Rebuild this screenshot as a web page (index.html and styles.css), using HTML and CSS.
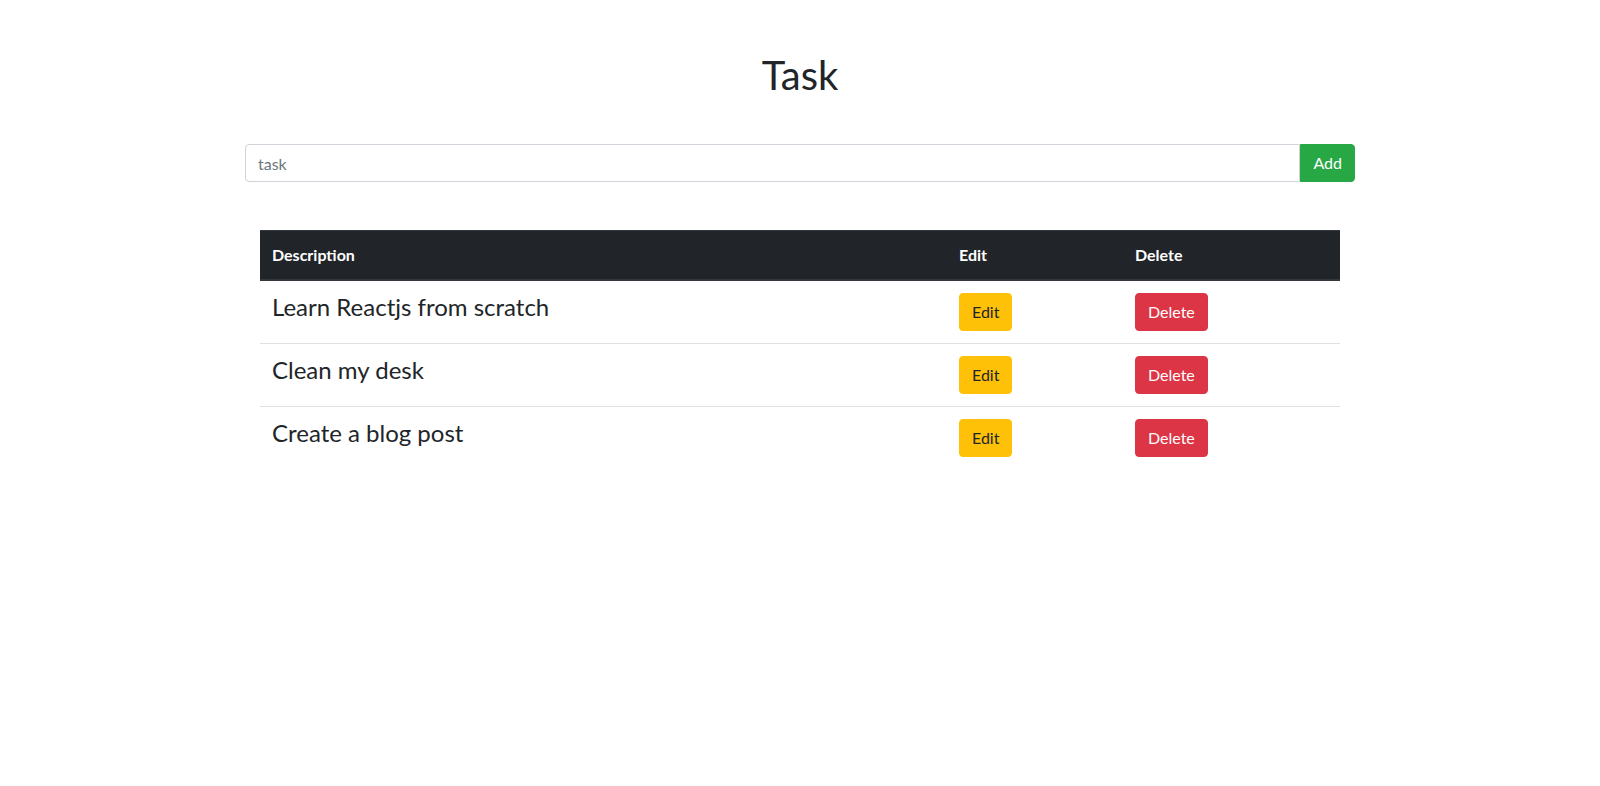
FILE: index.html
```html
<!DOCTYPE html>
<html lang="en">
<head>
<meta charset="utf-8">
<title>Task</title>
<link rel="stylesheet" href="styles.css">
</head>
<body>
<div class="container">
  <h1 class="title">Task</h1>
  <div class="input-group">
    <input class="task-input" type="text" placeholder="task">
    <button class="btn btn-add">Add</button>
  </div>
  <div class="table-wrap">
    <table class="task-table">
      <thead>
        <tr>
          <th class="col-desc">Description</th>
          <th class="col-edit">Edit</th>
          <th class="col-del">Delete</th>
        </tr>
      </thead>
      <tbody>
        <tr>
          <td><h4 class="task-text">Learn Reactjs from scratch</h4></td>
          <td><button class="btn btn-edit">Edit</button></td>
          <td><button class="btn btn-delete">Delete</button></td>
        </tr>
        <tr>
          <td><h4 class="task-text">Clean my desk</h4></td>
          <td><button class="btn btn-edit">Edit</button></td>
          <td><button class="btn btn-delete">Delete</button></td>
        </tr>
        <tr>
          <td><h4 class="task-text">Create a blog post</h4></td>
          <td><button class="btn btn-edit">Edit</button></td>
          <td><button class="btn btn-delete">Delete</button></td>
        </tr>
      </tbody>
    </table>
  </div>
</div>
</body>
</html>
```
FILE: styles.css
```css
* { box-sizing: border-box; }

body {
  margin: 0;
  font-family: Lato, "Liberation Sans", sans-serif;
  font-size: 16px;
  line-height: 1.5;
  color: #212529;
  background: #fff;
}

.container {
  max-width: 1140px;
  margin: 0 auto;
  padding: 0 15px;
}

.title {
  text-align: center;
  font-size: 40px;
  font-weight: 400;
  line-height: 1.2;
  margin: 51px 0 0;
}

.input-group {
  display: flex;
  margin-top: 45px;
}

.task-input {
  flex: 1;
  height: 38px;
  padding: 6px 12px;
  font-family: inherit;
  font-size: 16px;
  line-height: 1.5;
  color: #495057;
  border: 1px solid #ced4da;
  border-radius: 4px 0 0 4px;
  outline: none;
}

.task-input::placeholder { color: #6c757d; }

.btn {
  display: inline-block;
  font-family: inherit;
  font-size: 16px;
  line-height: 1.5;
  padding: 6px 12px;
  border: 1px solid transparent;
  border-radius: 4px;
  cursor: pointer;
}

.btn-add {
  background: #28a745;
  border-color: #28a745;
  color: #fff;
  border-radius: 0 4px 4px 0;
}

.btn-edit {
  background: #ffc107;
  border-color: #ffc107;
  color: #212529;
}

.btn-delete {
  background: #dc3545;
  border-color: #dc3545;
  color: #fff;
}

.table-wrap {
  padding: 0 15px;
  margin-top: 48px;
}

.task-table {
  width: 100%;
  border-collapse: collapse;
}

.task-table th {
  text-align: left;
  font-weight: 700;
  color: #fff;
  background: #212529;
  padding: 12px;
  border-top: 1px solid #32383e;
  border-bottom: 2px solid #32383e;
  vertical-align: bottom;
}

.col-desc { width: 687px; }
.col-edit { width: 176px; }
.col-del { width: 217px; }

.task-table td {
  padding: 12px;
  border-top: 1px solid #dee2e6;
  vertical-align: top;
}

.task-table tbody tr:first-child td { border-top: none; }

.task-text {
  margin: 0 0 8px;
  font-size: 24px;
  font-weight: 400;
  line-height: 1.2;
}
```
